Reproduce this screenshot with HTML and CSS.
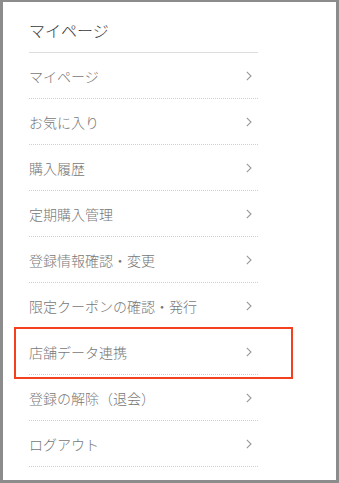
FILE: index.html
```html
<!DOCTYPE html>
<html lang="ja">
<head>
<meta charset="utf-8">
<link rel="stylesheet" href="styles.css">
</head>
<body>
<div class="frame">
  <div class="menu">
    <h2 class="menu-title">マイページ</h2>
    <ul class="menu-list">
      <li class="menu-item"><span>マイページ</span><svg class="chev" viewBox="0 0 6 10"><path d="M0.8 0.8 L5 5 L0.8 9.2"/></svg></li>
      <li class="menu-item"><span>お気に入り</span><svg class="chev" viewBox="0 0 6 10"><path d="M0.8 0.8 L5 5 L0.8 9.2"/></svg></li>
      <li class="menu-item"><span>購入履歴</span><svg class="chev" viewBox="0 0 6 10"><path d="M0.8 0.8 L5 5 L0.8 9.2"/></svg></li>
      <li class="menu-item"><span>定期購入管理</span><svg class="chev" viewBox="0 0 6 10"><path d="M0.8 0.8 L5 5 L0.8 9.2"/></svg></li>
      <li class="menu-item"><span>登録情報確認・変更</span><svg class="chev" viewBox="0 0 6 10"><path d="M0.8 0.8 L5 5 L0.8 9.2"/></svg></li>
      <li class="menu-item"><span>限定クーポンの確認・発行</span><svg class="chev" viewBox="0 0 6 10"><path d="M0.8 0.8 L5 5 L0.8 9.2"/></svg></li>
      <li class="menu-item highlighted"><span>店舗データ連携</span><svg class="chev" viewBox="0 0 6 10"><path d="M0.8 0.8 L5 5 L0.8 9.2"/></svg></li>
      <li class="menu-item"><span>登録の解除（退会）</span><svg class="chev" viewBox="0 0 6 10"><path d="M0.8 0.8 L5 5 L0.8 9.2"/></svg></li>
      <li class="menu-item"><span>ログアウト</span><svg class="chev" viewBox="0 0 6 10"><path d="M0.8 0.8 L5 5 L0.8 9.2"/></svg></li>
    </ul>
  </div>
</div>
</body>
</html>
```
FILE: styles.css
```css
html, body {
  margin: 0;
  padding: 0;
  background: #ffffff;
}
.frame {
  box-sizing: border-box;
  width: 339px;
  height: 483px;
  border-style: solid;
  border-color: #8c8c8c;
  border-width: 2px 3px 3px 3px;
  background: #ffffff;
  font-family: "Noto Sans CJK JP", "Noto Sans", sans-serif;
  overflow: hidden;
}
.menu {
  width: 229px;
  margin-left: 26px;
}
.menu-title {
  margin: 0;
  padding: 16px 0 10px;
  font-size: 16px;
  line-height: 24px;
  font-weight: 300;
  color: #3a3a3a;
  border-bottom: 1px solid #dddddd;
}
.menu-list {
  list-style: none;
  margin: 0;
  padding: 0;
}
.menu-item {
  position: relative;
  height: 45px;
  display: flex;
  align-items: center;
  justify-content: space-between;
  border-bottom: 1px dotted #cfcfcf;
  font-size: 14px;
  font-weight: 300;
  color: #777777;
}
.chev {
  width: 6px;
  height: 10px;
  margin-right: 6px;
  fill: none;
  stroke: #999999;
  stroke-width: 1.1;
}
.highlighted::after {
  content: "";
  position: absolute;
  left: -15px;
  right: -35px;
  top: -2px;
  bottom: -5px;
  border: 2.5px solid #f3401f;
  pointer-events: none;
}
```
